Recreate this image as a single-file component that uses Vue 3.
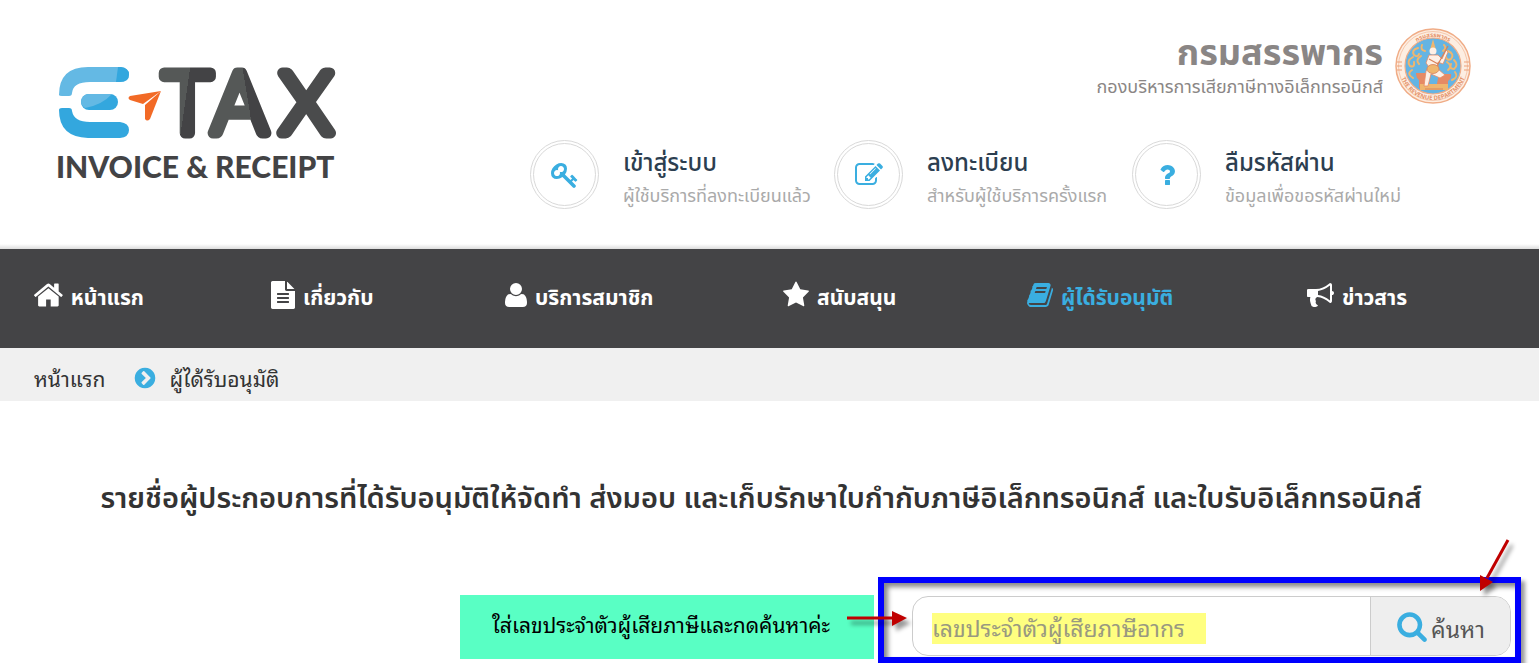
<template>
  <div class="page">
    <header class="site-header">
      <a href="#" class="logo" aria-label="E-TAX Invoice &amp; Receipt">
        <svg class="logo-mark" viewBox="0 0 300 130" width="300" height="130">
          <defs>
            <linearGradient id="letter-t" x1="0" y1="0" x2="1" y2="0.3">
              <stop offset="56%" stop-color="#555857" />
              <stop offset="56%" stop-color="#434345" />
            </linearGradient>
            <linearGradient id="letter-a" x1="0" y1="0" x2="1" y2="-0.3">
              <stop offset="46%" stop-color="#555857" />
              <stop offset="46%" stop-color="#434345" />
            </linearGradient>
          </defs>
          <path d="M3 30 Q3 2 32 2 H64 Q73 3 73 9.500 Q73 17 64 17 H34 Q17 17 16 28 Q16 31 13 31 H6 Q3 31 3 30Z" fill="#64b9e4" />
          <path d="M62 2 H65 Q73 3 73 9.500 Q73 17 64 17 H60Z" fill="#33a7de" />
          <rect x="25" y="29" width="37" height="16" rx="8" fill="#33a7de" />
          <path d="M33 29 H56 Q46 40 29 43 Q25 40 25 37 Q26 29 33 29Z" fill="#64b9e4" />
          <path d="M3 45 Q3 43 6 43 H13 Q16 43 16 46 Q18 57 34 57 H64 Q73 58 73 65 Q73 72 64 73 H32 Q3 72 3 45Z" fill="#33a7de" />
          <path d="M105 26 L74 31 Q71 33 74 35 L87 39Z" fill="#f26a26" />
          <path d="M105 26 L89 40 V54 Q91 57 94 54Z" fill="#f26a26" />
          <text class="logo-tax" x="107" y="68" fill="url(#letter-t)" stroke="url(#letter-t)">T</text>
          <text class="logo-tax" x="156" y="68" fill="url(#letter-a)" stroke="url(#letter-a)">A</text>
          <text class="logo-tax" x="224" y="68" fill="#4a4b4c" stroke="#4a4b4c">X</text>
          <text class="logo-sub" x="0" y="113">INVOICE &amp; RECEIPT</text>
        </svg>
      </a>

      <div class="header-side">
        <div class="department">
          <div class="department-text">
            <div class="department-name">กรมสรรพากร</div>
            <div class="department-unit">กองบริหารการเสียภาษีทางอิเล็กทรอนิกส์</div>
          </div>
          <svg class="emblem" viewBox="0 0 76 76" width="76" height="76" aria-hidden="true">
            <defs>
              <path id="arc-top" d="M9 38 A29 29 0 0 1 67 38" />
              <path id="arc-bottom" d="M4 38 A34 34 0 0 0 72 38" />
            </defs>
            <circle cx="38" cy="38" r="37" fill="#fdeee2" stroke="#f0ac86" stroke-width="1.500" />
            <circle cx="38" cy="38" r="34.500" fill="none" stroke="#f3bd9d" stroke-width="0.800" />
            <circle cx="38" cy="38" r="28" fill="#65b4e3" stroke="#f0ac86" stroke-width="1.200" />
            <text class="emblem-text"><textPath href="#arc-top" startOffset="50%" text-anchor="middle">กรมสรรพากร</textPath></text>
            <text class="emblem-text"><textPath href="#arc-bottom" startOffset="50%" text-anchor="middle">THE REVENUE DEPARTMENT</textPath></text>
            <g fill="none" stroke="#efb66e" stroke-width="2" stroke-linecap="round">
              <path d="M23 20 q-7 2 -4 7 q4 3 5 -1 M18 29 q-7 4 -3 9 q5 2 4 -4 M26 28 q-6 4 -2 8 M17 42 q-6 4 1 8 M27 17 q-2 5 3 6" />
              <path d="M53 23 q7 3 3 8 q-4 2 -5 -2 M59 32 q5 5 0 9 q-5 0 -3 -5 M52 34 q6 4 1 8 M60 44 q4 5 -3 8 M49 17 q3 3 -1 6" />
            </g>
            <path d="M21 45 H34 V60 H24 V52 Q21 50 21 45Z M44 46 H56 Q57 50 53 53 V60 H41Z" fill="#e68a64" />
            <path d="M25 56 H53 V62 H25Z" fill="#efb66e" />
            <path d="M38 11 L41 22 H35Z" fill="#efb66e" />
            <circle cx="38" cy="23" r="3.500" fill="#fdf0e6" />
            <path d="M34 27 H43 L47 31 L51 22 L53 24 L48 36 L43 34 V41 L50 47 L45 50 L36 46 L33 58 H29 L31 43 L34 39 L31 35Z" fill="#fdf0e6" stroke="#e68a64" stroke-width="0.800" />
            <ellipse cx="38" cy="41" rx="6" ry="4.500" fill="#efb66e" stroke="#d9825a" stroke-width="0.800" />
            <path d="M42 38 L53 18 M34 31 L43 36 M30 61 H48" stroke="#d9825a" stroke-width="1.200" />
            <path d="M2 34 L7 34 M2 38 H7 M2 42 H7 M69 34 H74 M69 38 H74 M69 42 H74" stroke="#eda079" />
          </svg>
        </div>

        <div class="quick-links">
          <a v-for="link in quickLinks" :key="link.title" href="#" class="quick-link">
            <span class="quick-circle">
              <svg viewBox="0 0 1792 1792" class="quick-icon"><path :d="icons[link.icon]" /></svg>
            </span>
            <span class="quick-text">
              <span class="quick-title">{{ link.title }}</span>
              <span class="quick-desc">{{ link.desc }}</span>
            </span>
          </a>
        </div>
      </div>
    </header>

    <nav class="main-nav">
      <a v-for="item in navItems" :key="item.label" href="#" class="nav-item" :class="{ active: item.active }">
        <svg :viewBox="item.box" class="nav-icon" :class="item.icon"><path :d="icons[item.icon]" /></svg>
        <span class="nav-label">{{ item.label }}</span>
      </a>
    </nav>

    <div class="breadcrumb">
      <a href="#">หน้าแรก</a>
      <svg viewBox="0 0 1792 1792" class="crumb-icon"><path :d="icons.chevron" /></svg>
      <span>ผู้ได้รับอนุมัติ</span>
    </div>

    <main class="content">
      <h1 class="page-title">รายชื่อผู้ประกอบการที่ได้รับอนุมัติให้จัดทำ ส่งมอบ และเก็บรักษาใบกำกับภาษีอิเล็กทรอนิกส์ และใบรับอิเล็กทรอนิกส์</h1>

      <div class="search-row">
        <div class="note">
          ใส่เลขประจำตัวผู้เสียภาษีและกดค้นหาค่ะ
          <svg class="arrow arrow-right" viewBox="0 0 64 24" width="64" height="24">
            <path d="M0 10 H46" stroke="#c00000" stroke-width="3" />
            <path d="M45 3 L60 10 L45 18Z" fill="#c00000" />
          </svg>
        </div>
        <div class="frame">
          <form class="search-box" @submit.prevent>
            <div class="search-field">
              <input v-model="taxId" type="text" class="search-input" placeholder="เลขประจำตัวผู้เสียภาษีอากร" aria-label="เลขประจำตัวผู้เสียภาษีอากร" />
            </div>
            <button type="submit" class="search-btn">
              <svg viewBox="0 0 1792 1792" class="search-icon"><path :d="icons.search" /></svg>
              <span class="search-label">ค้นหา</span>
            </button>
          </form>
          <svg class="arrow arrow-down" viewBox="0 0 40 60" width="40" height="60">
            <path d="M30 3 L9 41" stroke="#c00000" stroke-width="3" />
            <path d="M2 54 L2 38 L15 45Z" fill="#c00000" />
          </svg>
        </div>
      </div>
    </main>
  </div>
</template>

<script setup>
import { ref } from 'vue'

const taxId = ref('')

const quickLinks = [
  { icon: 'key', title: 'เข้าสู่ระบบ', desc: 'ผู้ใช้บริการที่ลงทะเบียนแล้ว' },
  { icon: 'edit', title: 'ลงทะเบียน', desc: 'สำหรับผู้ใช้บริการครั้งแรก' },
  { icon: 'question', title: 'ลืมรหัสผ่าน', desc: 'ข้อมูลเพื่อขอรหัสผ่านใหม่' },
]

// box trims the side bearings of each glyph
const navItems = [
  { icon: 'home', box: '90 0 1612 1792', label: 'หน้าแรก' },
  { icon: 'file', box: '128 0 1536 1792', label: 'เกี่ยวกับ' },
  { icon: 'user', box: '192 0 1408 1792', label: 'บริการสมาชิก' },
  { icon: 'star', box: '64 0 1664 1792', label: 'สนับสนุน' },
  { icon: 'book', box: '60 0 1664 1792', label: 'ผู้ได้รับอนุมัติ', active: true },
  { icon: 'bullhorn', box: '64 0 1728 1792', label: 'ข่าวสาร' },
]

const icons = {
  key: 'M832 512q0-80-56-136t-136-56-136 56-56 136q0 42 19 83-41-19-83-19-80 0-136 56t-56 136 56 136 136 56 136-56 56-136q0-42-19-83 41 19 83 19 80 0 136-56t56-136zm851 704q0 17-49 66t-66 49q-9 0-28.5-16t-36.5-33-38.5-40-24.5-26l-96 96 220 220q28 28 28 68 0 42-39 81t-81 39q-40 0-68-28l-671-671q-176 131-365 131-163 0-265.5-102.5t-102.5-265.5q0-160 95-313t248-248 313-95q163 0 265.5 102.5t102.5 265.5q0 189-131 365l355 355 96-96q-3-3-26-24.5t-40-38.5-33-36.5-16-28.5q0-17 49-66t66-49q13 0 23 10 6 6 46 44.5t82 79.5 86.5 86 73 78 28.5 41z',
  edit: 'M888 1184l116-116-152-152-116 116v56h96v96h56zm440-720q-16-16-33 1l-350 350q-17 17-1 33t33-1l350-350q17-17 1-33zm80 594v190q0 119-84.5 203.5t-203.5 84.5h-832q-119 0-203.5-84.5t-84.5-203.5v-832q0-119 84.5-203.5t203.5-84.5h832q63 0 117 25 15 7 18 23 3 17-9 29l-49 49q-14 14-32 8-23-6-45-6h-832q-66 0-113 47t-47 113v832q0 66 47 113t113 47h832q66 0 113-47t47-113v-126q0-13 9-22l64-64q15-15 35-7t20 29zm-96-738l288 288-672 672h-288v-288zm444 132l-92 92-288-288 92-92q28-28 68-28t68 28l152 152q28 28 28 68t-28 68z',
  question: 'M1088 1256v240q0 16-12 28t-28 12h-240q-16 0-28-12t-12-28v-240q0-16 12-28t28-12h240q16 0 28 12t12 28zm316-600q0 54-15.5 101t-35 76.5-55 59.5-57.5 43.5-61 35.5q-41 23-68.5 65t-27.5 67q0 17-12 32.5t-28 15.5h-240q-15 0-25.5-18.5t-10.5-37.5v-45q0-83 65-156.5t143-108.5q59-27 84-56t25-76q0-42-46.5-74t-107.5-32q-65 0-108 29-35 25-107 115-13 16-31 16-12 0-25-8l-164-125q-13-10-15.5-25t5.5-28q160-266 464-266 80 0 161 31t146 83 106 127.5 41 158.5z',
  home: 'M1472 992v480q0 26-19 45t-45 19h-384v-384h-256v384h-384q-26 0-45-19t-19-45v-480q0-1 .5-3t.5-3l575-474 575 474q1 2 1 6zm223-69l-62 74q-8 9-21 11h-3q-13 0-21-7l-692-577-692 577q-12 8-24 7-13-2-21-11l-62-74q-8-10-7-23.5t11-21.5l719-599q32-26 76-26t76 26l244 204v-195q0-14 9-23t23-9h192q14 0 23 9t9 23v408l219 182q10 8 11 21.5t-7 23.5z',
  file: 'M1596 476q14 14 28 36h-472v-472q22 14 36 28zm-476 164h544v1056q0 40-28 68t-68 28h-1344q-40 0-68-28t-28-68v-1600q0-40 28-68t68-28h800v544q0 40 28 68t68 28zm160 736v-64q0-14-9-23t-23-9h-704q-14 0-23 9t-9 23v64q0 14 9 23t23 9h704q14 0 23-9t9-23zm0-256v-64q0-14-9-23t-23-9h-704q-14 0-23 9t-9 23v64q0 14 9 23t23 9h704q14 0 23-9t9-23zm0-256v-64q0-14-9-23t-23-9h-704q-14 0-23 9t-9 23v64q0 14 9 23t23 9h704q14 0 23-9t9-23z',
  user: 'M1600 1405q0 120-73 189.500t-194 69.500h-874q-121 0-194-69.500t-73-189.500q0-53 3.500-103.500t14-109 26.500-108.500 43-97.500 62-81 85.500-53.500 111.500-20q9 0 42 21.500t74.500 48 108 48 133.500 21.500 133.500-21.500 108-48 74.500-48 42-21.500q61 0 111.500 20t85.500 53.500 62 81 43 97.500 26.500 108.500 14 109 3.500 103.500zm-320-893q0 159-112.500 271.500t-271.500 112.500-271.500-112.500-112.500-271.500 112.500-271.500 271.500-112.500 271.500 112.500 112.500 271.500z',
  star: 'M1728 647q0 22-26 48l-363 354 86 500q1 7 1 20 0 21-10.5 35.5t-30.5 14.5q-19 0-40-12l-449-236-449 236q-22 12-40 12-21 0-31.5-14.5t-10.5-35.5q0-6 2-20l86-500-364-354q-25-27-25-48 0-37 56-46l502-73 225-455q19-41 49-41t49 41l225 455 502 73q56 9 56 46z',
  book: 'M1703 478q40 57 18 129l-275 906q-19 64-76.5 107.5t-122.5 43.5h-923q-77 0-148.5-53.5t-99.5-131.5q-24-67-2-127 0-4 3-27t4-37q1-8-3-21.5t-3-19.5q2-11 8-21t16.5-23.5 16.5-23.5q23-38 45-91.5t30-91.5q3-10 .5-30t-.5-28q3-11 17-28t17-23q21-36 42-92t25-90q1-9-2.5-32t.5-28q4-13 22-30.5t22-22.5q19-26 42.5-84.5t27.5-96.5q1-8-3-25.5t-2-26.5q2-8 9-18t18-23 17-21q8-12 16.5-30.5t15-35 16-36 19.5-32 26.5-23.5 36-11.5 47.5 5.5l-1 3q38-9 51-9h761q74 0 114 56t18 130l-274 906q-36 119-71.5 153.5t-128.5 34.5h-869q-27 0-38 15-11 16-1 43 24 70 144 70h923q29 0 56-15.5t35-41.5l300-987q7-22 5-57 38 15 59 43zm-1064 2q-4 13 2 22.5t20 9.5h608q13 0 25.5-9.5t16.5-22.5l21-64q4-13-2-22.5t-20-9.5h-608q-13 0-25.5 9.5t-16.5 22.5zm-83 256q-4 13 2 22.5t20 9.5h608q13 0 25.5-9.5t16.5-22.5l21-64q4-13-2-22.5t-20-9.5h-608q-13 0-25.5 9.5t-16.5 22.5z',
  bullhorn: 'M1664 640q53 0 90.5 37.5t37.5 90.5-37.5 90.5-90.5 37.5v384q0 52-38 90t-90 38q-417-347-812-380-58 19-91 66t-31 100.5 40 92.5q-20 33-23 65.5t6 58 33.5 55 48 50 61.5 50.5q-29 58-111.5 83t-168.5 11.5-132-55.5q-7-23-29.5-87.5t-32-94.5-23-89-15-101 3.5-98.5 22-110.5h-122q-66 0-113-47t-47-113v-192q0-66 47-113t113-47h480q435 0 896-384 52 0 90 38t38 90v384zm-128 604v-954q-394 302-768 343v270q377 42 768 341z',
  chevron: 'M845 1395l454-454q19-19 19-45t-19-45l-454-454q-19-19-45-19t-45 19l-102 102q-19 19-19 45t19 45l307 307-307 307q-19 19-19 45t19 45l102 102q19 19 45 19t45-19zm819-499q0 209-103 385.5t-279.5 279.5-385.5 103-385.5-103-279.5-279.5-103-385.5 103-385.5 279.5-279.5 385.5-103 385.5 103 279.5 279.5 103 385.5z',
  search: 'M1216 832q0-185-131.5-316.5t-316.5-131.5-316.5 131.5-131.5 316.5 131.5 316.5 316.5 131.5 316.5-131.5 131.5-316.5zm512 832q0 52-38 90t-90 38q-54 0-90-38l-343-342q-179 124-399 124-143 0-273.5-55.5t-225-150-150-225-55.5-273.5 55.5-273.5 150-225 225-150 273.5-55.5 273.5 55.5 225 150 150 225 55.5 273.5q0 220-124 399l343 343q37 37 37 90z',
}
</script>

<style>
body {
  margin: 0;
  background: #fff;
}
</style>

<style scoped>
.page {
  font-family: "Noto Sans", "Noto Sans Thai", sans-serif;
  color: #333;
}

.page a {
  color: inherit;
  text-decoration: none;
}

svg {
  display: block;
  flex: none;
}

.site-header {
  display: flex;
  justify-content: space-between;
  min-height: 249px;
  box-sizing: border-box;
  padding: 28px 68px 0 56px;
  background: linear-gradient(to top, #ddd, #fff 5px);
}

.logo {
  padding-top: 37px;
}

.logo-mark {
  overflow: visible;
}

.logo-tax {
  font-family: Lato, sans-serif;
  font-size: 84px;
  font-weight: 300;
  stroke-width: 11px;
  stroke-linejoin: round;
}

.logo-sub {
  font-family: Lato, sans-serif;
  font-size: 30px;
  font-weight: 900;
  fill: #434345;
}

.header-side {
  display: flex;
  flex-direction: column;
  gap: 36px;
}

.department {
  display: flex;
  justify-content: flex-end;
  gap: 12px;
}

.department-text {
  text-align: right;
  color: #8a8685;
}

.department-name {
  font-size: 36px;
  line-height: 48px;
  font-weight: 700;
}

.department-unit {
  font-size: 18px;
  line-height: 20px;
}

.emblem-text {
  font-family: "Noto Sans", "Noto Sans Thai", sans-serif;
  font-size: 6px;
  font-weight: 700;
  fill: #e5936a;
}

.quick-links {
  display: grid;
  grid-template-columns: 304px 298px 339px;
}

.quick-link {
  display: flex;
  gap: 24px;
  white-space: nowrap;
}

.quick-circle {
  flex: none;
  display: flex;
  align-items: center;
  justify-content: center;
  width: 61px;
  height: 61px;
  border: 4px double #d9d9d9;
  border-radius: 50%;
}

.quick-icon {
  width: 28px;
  height: 28px;
  fill: #3aaee0;
}

.quick-text {
  display: flex;
  flex-direction: column;
  padding-top: 6px;
}

.quick-title {
  font-size: 24px;
  line-height: 32px;
  font-weight: 500;
  color: #2c3e50;
}

.quick-desc {
  font-size: 18px;
  line-height: 34px;
  color: #aaa;
}

.main-nav {
  display: grid;
  grid-template-columns: 237fr 234fr 278fr 244fr 280fr 232fr;
  align-items: center;
  height: 99px;
  box-sizing: border-box;
  padding: 0 0 8px 34px;
  background: #444446;
  color: #fff;
}

.nav-item {
  display: flex;
  align-items: center;
  gap: 8px;
  height: 32px;
  font-size: 21px;
  line-height: 28px;
  font-weight: 700;
  white-space: nowrap;
}

.page .nav-item.active {
  color: #3aaee0;
}

.nav-label {
  padding-top: 4px;
}

.nav-icon {
  width: auto;
  height: 28px;
  fill: currentColor;
}

.nav-icon.home {
  height: 32px;
}

.breadcrumb {
  display: flex;
  align-items: center;
  gap: 12px;
  min-height: 53px;
  box-sizing: border-box;
  padding: 6px 34px 0;
  background: #f0f0f0;
  font-family: "Noto Sans Thai Looped", "Noto Looped Thai", Loma, Waree, Garuda, "Noto Sans", sans-serif;
  font-size: 21px;
  line-height: 28px;
}

.crumb-icon {
  width: 24px;
  height: 24px;
  margin-left: 16px;
  fill: #3aaee0;
}

.content {
  padding: 72px 17px 0 0;
}

.page-title {
  margin: 0;
  font-size: 29px;
  line-height: 48px;
  font-weight: 600;
  text-align: center;
  white-space: nowrap;
}

.search-row {
  display: flex;
  align-items: center;
  justify-content: flex-end;
  gap: 4px;
  margin-top: 56px;
}

.note {
  position: relative;
  width: 414px;
  height: 64px;
  margin-top: 14px;
  padding: 0 0 0 32px;
  box-sizing: border-box;
  background: #59ffc4;
  color: #000;
  font-family: "Noto Sans Thai Looped", "Noto Looped Thai", Loma, Waree, Garuda, "Noto Sans", sans-serif;
  font-size: 21px;
  line-height: 58px;
  white-space: nowrap;
}

.frame {
  position: relative;
  width: 643px;
  margin-right: 1px;
  box-sizing: border-box;
  padding: 13px 4px 1px 28px;
  border: 6px solid #0000fe;
  box-shadow: 4px 4px 4px #999, inset 4px 4px 5px #888;
}

.search-box {
  display: flex;
  height: 60px;
  box-sizing: border-box;
  border: 1px solid #ccc;
  border-radius: 16px;
  overflow: hidden;
  background: #fff;
}

.search-field {
  flex: 1;
  display: flex;
  align-items: center;
  padding: 4px 19px 0;
}

.search-input {
  width: 274px;
  height: 31px;
  box-sizing: border-box;
  padding: 0 0 4px;
  border: 0;
  outline: 0;
  background: #ffff80;
  color: #555;
  font-family: "Noto Sans Thai Looped", "Noto Looped Thai", Loma, Waree, Garuda, "Noto Sans", sans-serif;
  font-size: 23px;
}

.search-input::placeholder {
  color: #999980;
}

.search-btn {
  display: flex;
  align-items: center;
  justify-content: center;
  gap: 3px;
  width: 140px;
  padding: 0;
  border: 0;
  border-left: 1px solid #ccc;
  background: #eee;
  color: #555;
  font-family: "Noto Sans Thai Looped", "Noto Looped Thai", Loma, Waree, Garuda, "Noto Sans", sans-serif;
  font-size: 23px;
  cursor: pointer;
}

.search-icon {
  width: 32px;
  height: 32px;
  fill: #3aaee0;
}

.search-label {
  padding-top: 2px;
}

.arrow {
  position: absolute;
  z-index: 2;
  filter: drop-shadow(4px 5px 2px rgba(0, 0, 0, 0.4));
}

.arrow-right {
  left: 387px;
  top: 13px;
}

.arrow-down {
  right: -3px;
  top: -46px;
}
</style>
